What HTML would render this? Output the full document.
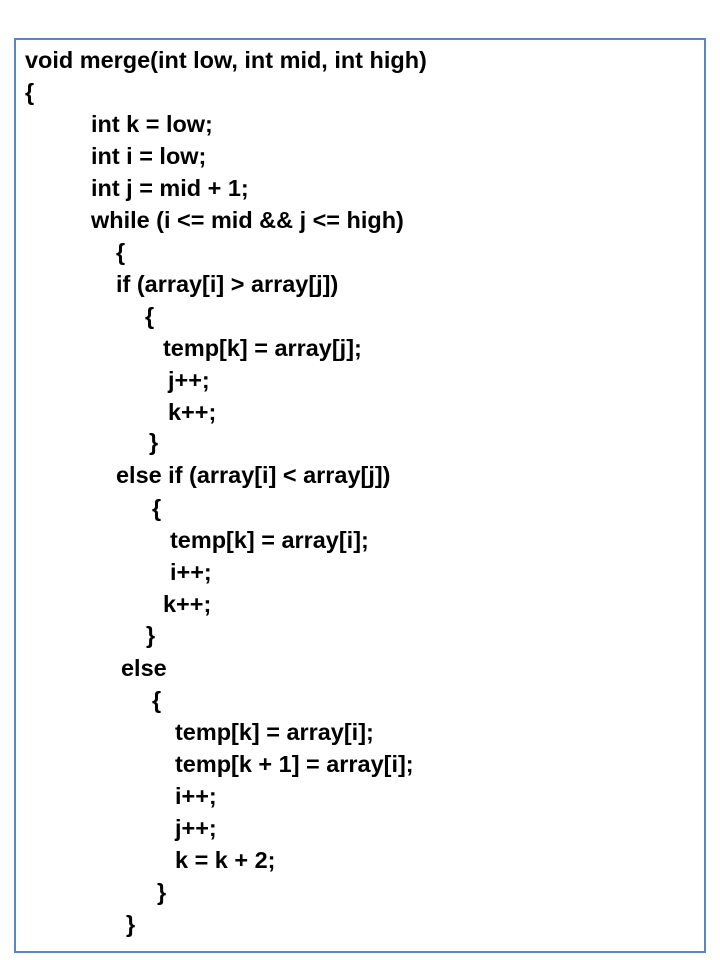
<!DOCTYPE html>
<html><head><style>
body{margin:0;width:720px;height:960px;background:#fff;position:relative;overflow:hidden}
.box{position:absolute;left:14px;top:38px;width:688px;height:911px;border:2px solid #5b87c0}
.l{position:absolute;font-family:"Liberation Sans",sans-serif;font-weight:bold;font-size:23px;line-height:24px;color:#000;white-space:pre;transform-origin:0 50%;transform:scaleX(1.02)}
</style></head><body>
<div class="box"></div>
<div class="l" style="left:25px;top:48px">void merge(int low, int mid, int high)</div>
<div class="l" style="left:25px;top:80px">{</div>
<div class="l" style="left:91px;top:112px">int k = low;</div>
<div class="l" style="left:91px;top:144px">int i = low;</div>
<div class="l" style="left:91px;top:176px">int j = mid + 1;</div>
<div class="l" style="left:91px;top:208px">while (i &lt;= mid &amp;&amp; j &lt;= high)</div>
<div class="l" style="left:116px;top:240px">{</div>
<div class="l" style="left:116px;top:272px">if (array[i] &gt; array[j])</div>
<div class="l" style="left:145px;top:304px">{</div>
<div class="l" style="left:163px;top:336px">temp[k] = array[j];</div>
<div class="l" style="left:168px;top:368px">j++;</div>
<div class="l" style="left:168px;top:400px">k++;</div>
<div class="l" style="left:149px;top:430px">}</div>
<div class="l" style="left:116px;top:463px">else if (array[i] &lt; array[j])</div>
<div class="l" style="left:152px;top:496px">{</div>
<div class="l" style="left:170px;top:528px">temp[k] = array[i];</div>
<div class="l" style="left:170px;top:560px">i++;</div>
<div class="l" style="left:163px;top:592px">k++;</div>
<div class="l" style="left:146px;top:623px">}</div>
<div class="l" style="left:121px;top:656px">else</div>
<div class="l" style="left:152px;top:688px">{</div>
<div class="l" style="left:175px;top:720px">temp[k] = array[i];</div>
<div class="l" style="left:175px;top:752px">temp[k + 1] = array[i];</div>
<div class="l" style="left:175px;top:784px">i++;</div>
<div class="l" style="left:175px;top:816px">j++;</div>
<div class="l" style="left:175px;top:848px">k = k + 2;</div>
<div class="l" style="left:157px;top:880px">}</div>
<div class="l" style="left:126px;top:912px">}</div>
</body></html>
